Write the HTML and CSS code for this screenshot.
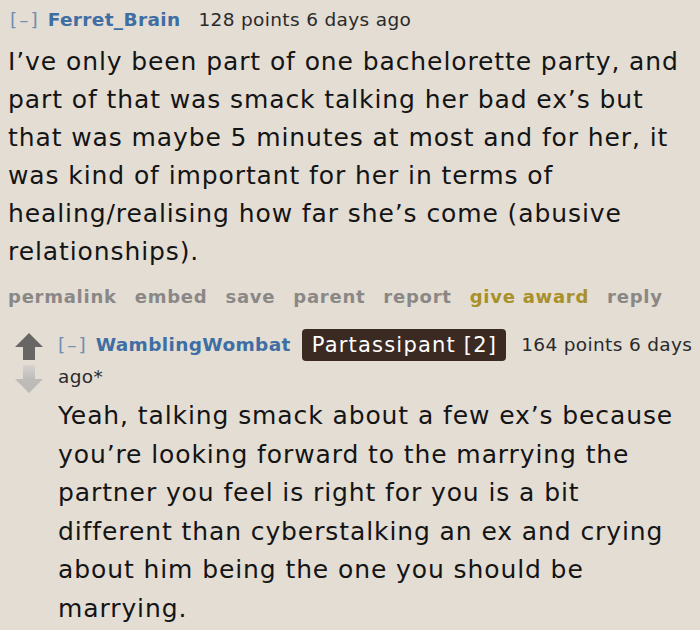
FILE: index.html
```html
<!DOCTYPE html>
<html>
<head>
<meta charset="utf-8">
<link rel="stylesheet" href="styles.css">
</head>
<body>
<div class="page">
  <div class="comment">
    <div class="tagline"><span class="expand">[–]</span><span class="author">Ferret_Brain</span><span class="score">128 points 6 days ago</span></div>
    <div class="md">I’ve only been part of one bachelorette party, and part of that was smack talking her bad ex’s but that was maybe 5 minutes at most and for her, it was kind of important for her in terms of healing/realising how far she’s come (abusive relationships).</div>
    <ul class="buttons">
      <li>permalink</li>
      <li>embed</li>
      <li>save</li>
      <li>parent</li>
      <li>report</li>
      <li class="award">give award</li>
      <li>reply</li>
    </ul>
  </div>
  <div class="child">
    <div class="arrows">
      <svg class="arrow" width="28" height="27" viewBox="0 0 28 27"><path d="M14 0 L28 14 L20 14 L20 27 L8 27 L8 14 L0 14 Z" fill="#686664"/></svg>
      <svg class="arrow" width="28" height="28" viewBox="0 0 28 28">
        <defs><linearGradient id="dg" x1="0" y1="0" x2="0" y2="1"><stop offset="0" stop-color="#d6d3cf"/><stop offset="0.5" stop-color="#bebcb9"/><stop offset="1" stop-color="#bbb9b6"/></linearGradient></defs>
        <path d="M8 0 L20 0 L20 14 L28 14 L14 28 L0 14 L8 14 Z" fill="url(#dg)"/>
      </svg>
    </div>
    <div class="entry">
      <div class="tagline t2"><span class="expand e2">[–]</span><span class="author a2">WamblingWombat</span><span class="flair">Partassipant [2]</span><span class="score">164 points 6 days</span> <span class="score">ago*</span></div>
      <div class="md md2">Yeah, talking smack about a few ex’s because you’re looking forward to the marrying the partner you feel is right for you is a bit different than cyberstalking an ex and crying about him being the one you should be marrying.</div>
    </div>
  </div>
</div>
</body>
</html>
```

FILE: styles.css
```css
html, body {
  margin: 0;
  padding: 0;
  background: #e3ddd4;
}
body {
  font-family: "DejaVu Sans", Verdana, sans-serif;
  color: #111;
}
.page {
  width: 700px;
  height: 630px;
  overflow: hidden;
  padding: 8px 14px 0 8px;
  box-sizing: border-box;
}
.tagline {
  font-size: 18.5px;
  line-height: 24px;
  letter-spacing: 0.35px;
  color: #333;
}
.expand {
  color: #6f8fb2;
  letter-spacing: 2px;
  margin-left: 2px;
  margin-right: 8px;
}
.e2 {
  margin-left: 0;
}
.author {
  color: #3f6ea3;
  font-weight: bold;
  margin-right: 18px;
}
.a2 {
  margin-right: 11px;
}
.score {
  color: #2a2a2a;
}
.md {
  font-size: 25px;
  line-height: 38px;
  letter-spacing: 0.9px;
  color: #141414;
  margin-top: 11px;
}
.buttons {
  list-style: none;
  margin: 15px 0 0 0;
  padding: 0;
  display: flex;
  gap: 18px;
  font-size: 18px;
  line-height: 22px;
  letter-spacing: 0.75px;
  font-weight: bold;
  color: #8a8886;
}
.buttons .award {
  color: #a8902a;
}
.child {
  display: flex;
  margin-top: 21px;
}
.arrows {
  width: 42px;
  flex: none;
  display: flex;
  flex-direction: column;
  align-items: center;
  gap: 5px;
  padding-top: 4px;
}
.entry {
  flex: 1;
  margin-left: 8px;
}
.t2 {
  line-height: 32px;
  margin-right: -12px;
}
.flair {
  display: inline-block;
  vertical-align: top;
  background: #3b2a22;
  color: #fff;
  border-radius: 4px;
  font-size: 21px;
  line-height: 32px;
  letter-spacing: 1.2px;
  padding: 0 9px 0 10px;
  margin-right: 15px;
}
.md2 {
  margin-top: 4px;
  line-height: 38.6px;
}
```
